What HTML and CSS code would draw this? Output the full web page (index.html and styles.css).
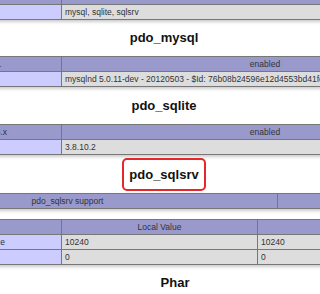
FILE: index.html
```html
<!DOCTYPE html>
<html>
<head>
<meta charset="utf-8">
<link rel="stylesheet" href="styles.css">
</head>
<body>
<div class="page">
  <table class="tbl t-first">
    <tr class="h"><th class="c1">PDO support</th><th>enabled</th></tr>
    <tr><td class="e">PDO drivers</td><td class="v">mysql, sqlite, sqlsrv</td></tr>
  </table>
  <h2 class="title gap36">pdo_mysql</h2>
  <table class="tbl t-wide">
    <tr class="h"><th class="c1 tail tail-60">PDO Driver for MySQL</th><th>enabled</th></tr>
    <tr><td class="e">Client API version</td><td class="v">mysqlnd 5.0.11-dev - 20120503 - $Id: 76b08b24596e12d4553bd41fc93cc</td></tr>
  </table>
  <h2 class="title gap37">pdo_sqlite</h2>
  <table class="tbl t-wide">
    <tr class="h"><th class="c1 tail tail-54">PDO Driver for SQLite 3.x</th><th>enabled</th></tr>
    <tr><td class="e">SQLite Library</td><td class="v">3.8.10.2</td></tr>
  </table>
  <div class="boxed-wrap"><h2 class="boxed">pdo_sqlsrv</h2></div>
  <table class="tbl t-support">
    <tr class="h"><th class="c1s">pdo_sqlsrv support</th><th>enabled</th></tr>
  </table>
  <table class="tbl t-dir">
    <tr class="h"><th class="c1">Directive</th><th class="c2">Local Value</th><th>Master Value</th></tr>
    <tr><td class="e tail tail-56">pdo_sqlsrv.client_buffer_max_kb_size</td><td class="v">10240</td><td class="v">10240</td></tr>
    <tr><td class="e">pdo_sqlsrv.log_severity</td><td class="v">0</td><td class="v">0</td></tr>
  </table>
  <h2 class="title title-phar gap-phar">Phar</h2>
</div>
</body>
</html>
```

FILE: styles.css
```css
html, body {
  margin: 0;
  padding: 0;
  background: #ffffff;
}
body {
  width: 320px;
  height: 294px;
  overflow: hidden;
  font-family: "Liberation Sans", Arial, sans-serif;
  color: #222;
}
.page {
  width: 320px;
  text-align: center;
}
.tbl {
  border-collapse: collapse;
  box-shadow: 1px 2px 3px #ccc;
  text-align: left;
}
.tbl th, .tbl td {
  box-sizing: border-box;
  border: 1px solid #777;
  font-size: 8.5px;
  line-height: 10px;
  padding: 2px 3px;
  height: 15px;
  color: #333;
  white-space: nowrap;
  overflow: hidden;
}
.tbl th {
  font-weight: normal;
  text-align: center;
}
.h { background: #99c; }
.e { background: #ccf; width: 386px; }
.v { background: #ddd; color: #444; }
.c1 { width: 386px; }
.c2 { width: 196px; }
.tbl .tail { text-align: right; }
.tbl .tail-60 { padding-right: 60px; }
.tbl .tail-54 { padding-right: 54px; }
.tbl .tail-56 { padding-right: 56px; }
.t-first, .t-wide {
  margin-left: -325px;
  width: 794px;
}
.t-first { margin-top: -11px; }
.t-support {
  margin-left: -143px;
  width: 620px;
}
.c1s { width: 420px; }
.t-dir {
  margin-top: 10px;
  margin-left: -325px;
  width: 899px;
}
.title {
  margin: 0;
  padding-left: 8px;
  font-size: 13px;
  font-weight: bold;
  color: #111;
}
.title-phar { padding-left: 30px; }
.gap36 { line-height: 36px; }
.gap37 { line-height: 37px; }
.gap-phar { line-height: 36px; }
.boxed-wrap {
  padding: 3px 0 2px 8px;
}
.boxed {
  display: inline-block;
  margin: 0;
  font-size: 13px;
  font-weight: bold;
  color: #111;
  line-height: 15px;
  padding: 7px 5px;
  border: 2px solid #e5262a;
  border-radius: 5px;
}
```
